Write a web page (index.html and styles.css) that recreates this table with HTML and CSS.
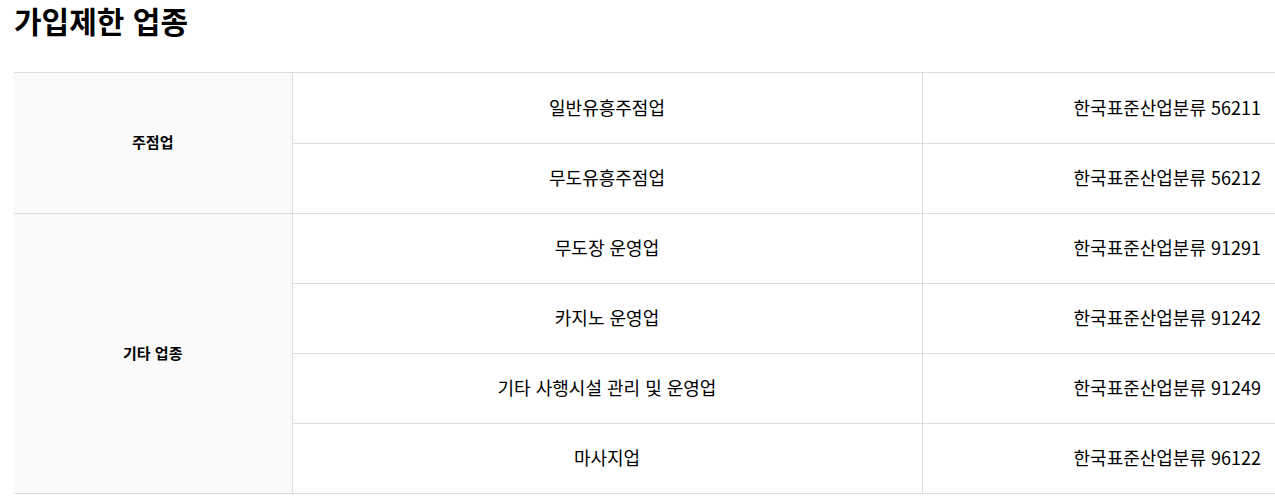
FILE: index.html
```html
<!DOCTYPE html>
<html lang="ko">
<head>
    <meta charset="UTF-8">
    <meta name="viewport" content="width=device-width, initial-scale=1.0">
    <title>가입제한 업종</title>
    <link rel="stylesheet" href="styles.css">
</head>
<body>
    <div class="restrict">
        <h2 class="restrict-title">가입제한 업종</h2>

        <table class="restrict-table">
            <colgroup>
                <col class="col-group">
                <col class="col-name">
                <col class="col-code">
            </colgroup>
            <tbody>
                <tr class="first">
                    <th rowspan="2">주점업</th>
                    <td class="name">일반유흥주점업</td>
                    <td class="code">한국표준산업분류 56211</td>
                </tr>
                <tr>
                    <td class="name">무도유흥주점업</td>
                    <td class="code">한국표준산업분류 56212</td>
                </tr>
                <tr>
                    <th rowspan="4">기타 업종</th>
                    <td class="name">무도장 운영업</td>
                    <td class="code">한국표준산업분류 91291</td>
                </tr>
                <tr>
                    <td class="name">카지노 운영업</td>
                    <td class="code">한국표준산업분류 91242</td>
                </tr>
                <tr>
                    <td class="name">기타 사행시설 관리 및 운영업</td>
                    <td class="code">한국표준산업분류 91249</td>
                </tr>
                <tr>
                    <td class="name">마사지업</td>
                    <td class="code">한국표준산업분류 96122</td>
                </tr>
            </tbody>
        </table>
    </div>
</body>
</html>
```

FILE: styles.css
```css
* {
    margin: 0;
    padding: 0;
    box-sizing: border-box;
}

body {
    font-family: "Noto Sans CJK KR", "Noto Sans", sans-serif;
    color: #111;
    background: #fff;
}

.restrict {
    padding: 0 0 0 14px;
}

.restrict-title {
    font-size: 30px;
    font-weight: 700;
    line-height: 40px;
    color: #000;
    margin-bottom: 32px;
}

.restrict-table {
    width: 100%;
    border-collapse: collapse;
    table-layout: fixed;
    border-top: 1px solid #ddd;
}

.col-group { width: 278px; }
.col-name { width: 630px; }

.restrict-table th,
.restrict-table td {
    height: 70px;
    padding-bottom: 3px;
    border-bottom: 1px solid #ddd;
    vertical-align: middle;
}

.restrict-table .first td {
    height: 71px;
}

.restrict-table th {
    background: #fafafa;
    font-size: 15px;
    font-weight: 700;
    color: #000;
    border-right: 1px solid #ddd;
}

.restrict-table .name {
    text-align: center;
    font-size: 18px;
    color: #000;
    border-right: 1px solid #ddd;
}

.restrict-table .code {
    text-align: right;
    font-size: 18px;
    color: #000;
    padding-right: 14px;
}
```
